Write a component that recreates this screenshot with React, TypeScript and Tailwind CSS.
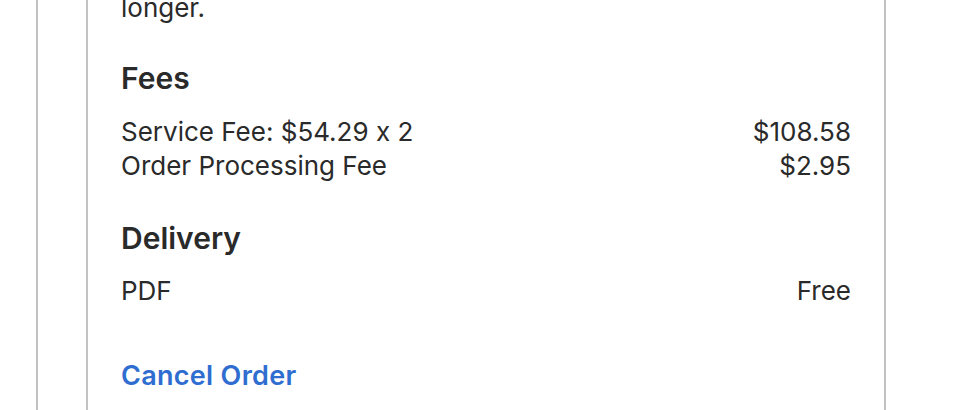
const rows = [
  { label: "Service Fee: $54.29 x 2", value: "$108.58" },
  { label: "Order Processing Fee", value: "$2.95" },
];

const App = () => {
  return (
    <div className="w-[976px] h-screen min-h-[410px] overflow-hidden bg-white font-['Inter',sans-serif] text-[#2a2a2a] [font-feature-settings:'calt'_0]">
      <div className="ml-[36px] h-full border-l-2 border-[#c2c2c2] pl-[48px]">
        <div className="w-[800px] h-full flex flex-col border-x-2 border-[#c2c2c2] px-[33px]">
          <p className="mt-[-9px] text-[26px] leading-[34px]">longer.</p>

          <h2 className="mt-[35px] text-[30px] leading-[36px] font-semibold">Fees</h2>
          <div className="mt-[19px] flex flex-col">
            {rows.map((row) => (
              <div key={row.label} className="flex justify-between text-[26px] leading-[34px]">
                <span>{row.label}</span>
                <span>{row.value}</span>
              </div>
            ))}
          </div>

          <h2 className="mt-[37px] text-[30px] leading-[36px] font-semibold">Delivery</h2>
          <div className="mt-[18px] flex justify-between text-[26px] leading-[34px]">
            <span>PDF</span>
            <span>Free</span>
          </div>

          <button className="mt-[51px] self-start text-[27px] leading-[34px] font-semibold tracking-[0.3px] text-[#2f6dd0]">
            Cancel Order
          </button>
        </div>
      </div>
    </div>
  );
};

export default App;
